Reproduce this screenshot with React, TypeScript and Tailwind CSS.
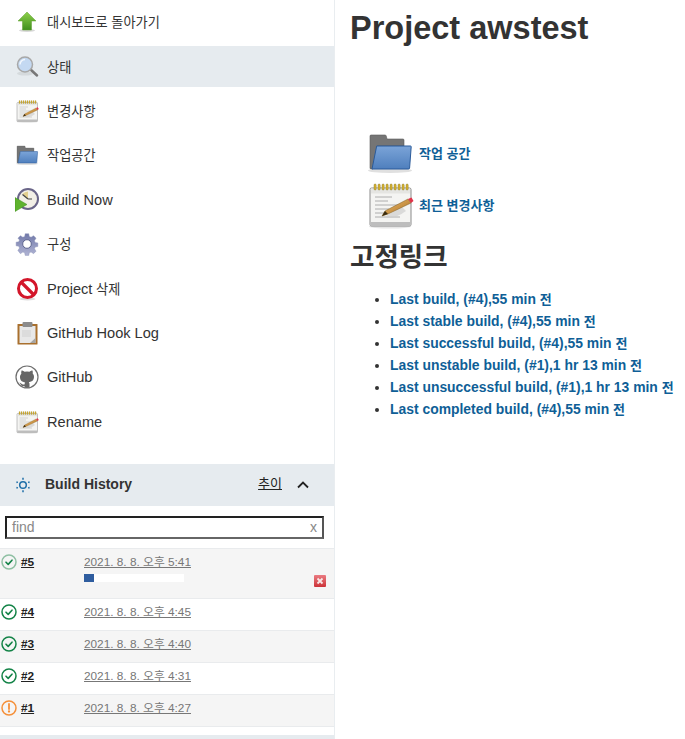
const FONT = "font-['Liberation_Sans','Noto_Sans_CJK_KR',sans-serif]";

function UpIcon() {
  return (
    <svg viewBox="0 0 24 24" className="w-6 h-6">
      <defs>
        <linearGradient id="upg" x1="0" y1="0" x2="0" y2="1">
          <stop offset="0" stopColor="#8ed04a" />
          <stop offset="1" stopColor="#3f8f1e" />
        </linearGradient>
      </defs>
      <ellipse cx="12" cy="20.500" rx="8" ry="1.500" fill="#d8d8d8" />
      <path d="M12 2 21 11h-4.500v9h-9v-9H3z" fill="url(#upg)" stroke="#5c9e2e" strokeWidth="0.500" />
    </svg>
  );
}

function SearchIcon() {
  return (
    <svg viewBox="0 0 24 24" className="w-6 h-6">
      <ellipse cx="10" cy="18.500" rx="8" ry="2" fill="#d5dadd" />
      <path d="m15 14 7 6.500" stroke="#777" strokeWidth="2.500" strokeLinecap="round" />
      <circle cx="10" cy="9.500" r="7.500" fill="#c4d9f2" stroke="#a8a8a8" strokeWidth="1.500" />
      <path d="M5 9.500a5 5 0 0 1 5-5" stroke="#f2f7fd" strokeWidth="1.500" fill="none" />
    </svg>
  );
}

function NoteIcon({ className }: { className: string }) {
  return (
    <svg viewBox="0 0 48 48" className={className}>
      <defs>
        <linearGradient id="penb" x1="0" y1="0" x2="1" y2="1">
          <stop offset="0" stopColor="#f0c070" />
          <stop offset="1" stopColor="#a86c20" />
        </linearGradient>
      </defs>
      <ellipse cx="24" cy="45.500" rx="21" ry="2" fill="#e6e6e6" />
      <rect x="4" y="7" width="41" height="38" rx="1.500" fill="#f4f4f2" stroke="#8a8a8a" />
      <rect x="4.500" y="41" width="40" height="4" fill="#bdbdbd" />
      <rect x="5" y="7.500" width="39" height="5" fill="#e5e5e2" />
      {[9, 13, 17, 21, 25, 29, 33, 37, 41].map((x) => (
        <rect key={x} x={x - 1} y="3" width="2.200" height="6" rx="1" fill="#d9b431" stroke="#7a6a20" strokeWidth="0.400" />
      ))}
      <path d="M9 16h17M9 20h13M9 24h25M9 28h14M9 32h9M9 36h25" stroke="#9d9d9d" strokeWidth="0.800" />
      <path d="M18 36c8 1 14 0 22-6l-4-4z" fill="#cfcfcf" opacity="0.7" />
      <path d="m16 35 3-5 23-12 3 4-23 11z" fill="url(#penb)" stroke="#7a5a20" strokeWidth="0.500" />
      <path d="m16 35 3-5 3 3z" fill="#3a2c10" />
      <path d="m42 18 3.500-1.500 2 3.500-2.500 2z" fill="#e0344a" />
    </svg>
  );
}

function FolderIcon({ className }: { className: string }) {
  return (
    <svg viewBox="0 0 48 48" className={className}>
      <defs>
        <linearGradient id="fb" x1="0" y1="0" x2="0" y2="1">
          <stop offset="0" stopColor="#7ba4d8" />
          <stop offset="1" stopColor="#4f7fbd" />
        </linearGradient>
      </defs>
      <ellipse cx="24" cy="41.500" rx="22" ry="2.500" fill="#e0e0e0" />
      <path d="M4 7c0-.6 .4-1 1-1h14c.6 0 1 .3 1.200 .8L21 10h16c.6 0 1 .4 1 1v6H11L7 40H5c-.6 0-1-.4-1-1z" fill="#757575" stroke="#5c5c5c" strokeWidth="0.600" />
      <path d="M10.700 17H44.500c.5 0 .8 .3 .7 .8L43.600 39c0 .6-.5 1-1 1H6z" fill="url(#fb)" stroke="#2b5b9a" strokeWidth="1" />
    </svg>
  );
}

function BuildIcon() {
  return (
    <svg viewBox="0 0 24 24" className="w-6 h-6">
      <circle cx="13" cy="11" r="10" fill="#f2efe6" stroke="#6a6588" strokeWidth="2" />
      <path d="M13 11V3.500A7.500 7.500 0 0 0 7.500 6z" fill="#e3cf8e" />
      <path d="M13 11 7.500 6.500M13 11h4" stroke="#444" strokeWidth="1.200" />
      <path d="M0 9.500V23.500l12-7z" fill="#5fb32e" stroke="#3f8f1e" strokeWidth="0.500" />
    </svg>
  );
}

function GearIcon() {
  return (
    <svg viewBox="0 0 24 24" className="w-6 h-6">
      <defs>
        <linearGradient id="gg" x1="0" y1="0" x2="0" y2="1">
          <stop offset="0" stopColor="#7078a8" />
          <stop offset="1" stopColor="#b0b4d4" />
        </linearGradient>
      </defs>
      <path
        d="M10 1h4l.6 3.200 2 .8L19.400 3.200l2.800 2.800-1.800 2.800.8 2 3 .6v4l-3 .6-.8 2 1.800 2.600-2.800 2.800-2.800-1.800-2 .8-.6 3h-4l-.6-3-2-.8-2.800 1.800L1.800 19.800l1.800-2.600-.8-2-3-.6v-4l3-.6.8-2L1.800 6l2.800-2.800L7.400 5l2-.8z"
        transform="translate(1.300 .8) scale(0.890)"
        fill="url(#gg)"
        stroke="#8e93b8"
        strokeWidth="0.500"
      />
      <circle cx="12" cy="12" r="4.300" fill="#fff" stroke="#5f6690" />
    </svg>
  );
}

function NoIcon() {
  return (
    <svg viewBox="0 0 24 24" className="w-6 h-6">
      <ellipse cx="12.500" cy="22" rx="8" ry="1.500" fill="#dcdcdc" />
      <circle cx="12.500" cy="11.500" r="9" fill="#fff" stroke="#d3162a" strokeWidth="3" />
      <path d="m6 5 13 13" stroke="#d3162a" strokeWidth="3.200" />
    </svg>
  );
}

function ClipboardIcon() {
  return (
    <svg viewBox="0 0 24 24" className="w-6 h-6">
      <rect x="2.500" y="3" width="20" height="20.500" rx="0.500" fill="#a9702e" />
      <rect x="4.500" y="5" width="16" height="17" fill="#e8e8e8" />
      <rect x="7.500" y="1" width="10" height="5" rx="1" fill="#8c8c8c" />
      <path d="M15 22h5.500v-5z" fill="#a5a5a5" />
      <path d="M7 9h9v7H7z" fill="#dcdcdc" />
    </svg>
  );
}

function GithubIcon() {
  return (
    <svg viewBox="0 0 24 24" className="w-6 h-6">
      <circle cx="12" cy="12" r="11" fill="#fff" stroke="#6e6e6e" strokeWidth="1.200" />
      <path
        d="M6.500 5.500c1.200 0 2.300 .7 3 1.300a9 9 0 0 1 5 0c.7-.6 1.800-1.300 3-1.300.4 1 .4 2.200.2 3 .8.900 1.300 2 1.300 3.300 0 3.700-2.200 5-5.200 5.300.5.500.7 1.200.7 2v3.500a11 11 0 0 1-5 0v-1.500c-2.500.5-3.500-.7-4-2-.3-.7-.7-1-1.200-1.300.8-.3 1.700.2 2.200 1 .6.800 1.500 1 3 .6 0-.8.300-1.500.7-2-3-.3-5.200-1.600-5.200-5.300 0-1.300.5-2.400 1.300-3.300-.2-.8-.2-2 .2-3z"
        fill="#666"
      />
    </svg>
  );
}

function SunIcon() {
  return (
    <svg viewBox="0 0 16 16" className="w-4 h-4" fill="none" stroke="#1f6fa8">
      <circle cx="8" cy="8" r="3.300" strokeWidth="1.500" />
      <path d="M8 .8v2M8 13.200v2M1.800 4.500l.6 1.500M14.200 4.500l-.6 1.500M1.800 11.500l.6-1.500M14.200 11.500l-.6-1.500" strokeWidth="1.500" />
    </svg>
  );
}

function Check({ faded }: { faded?: boolean }) {
  return (
    <svg viewBox="0 0 16 16" className="w-4 h-4" fill="none">
      <circle cx="8" cy="8" r="7" strokeWidth="1.500" stroke={faded ? "#8fc0a3" : "#138347"} />
      <path d="m5 8.200 2.200 2.200L11 6.200" strokeWidth="1.600" strokeLinecap="round" strokeLinejoin="round" stroke="#138347" />
    </svg>
  );
}

function Warn() {
  return (
    <svg viewBox="0 0 16 16" className="w-4 h-4" fill="none" stroke="#f5903a">
      <circle cx="8" cy="8" r="7" strokeWidth="1.500" />
      <path d="M8 4v5" strokeWidth="1.800" strokeLinecap="round" />
      <circle cx="8" cy="11.500" r="0.600" strokeWidth="1.100" />
    </svg>
  );
}

const tasks = [
  { icon: <UpIcon />, label: "대시보드로 돌아가기", ko: true },
  { icon: <SearchIcon />, label: "상태", ko: true, active: true },
  { icon: <NoteIcon className="w-6 h-6" />, label: "변경사항", ko: true },
  { icon: <FolderIcon className="w-6 h-6" />, label: "작업공간", ko: true },
  { icon: <BuildIcon />, label: "Build Now" },
  { icon: <GearIcon />, label: "구성", ko: true },
  { icon: <NoIcon />, label: "Project", suffix: "삭제" },
  { icon: <ClipboardIcon />, label: "GitHub Hook Log" },
  { icon: <GithubIcon />, label: "GitHub" },
  { icon: <NoteIcon className="w-6 h-6" />, label: "Rename" },
];

const builds = [
  { num: "#4", date: "2021. 8. 8. 오후 4:45", odd: false },
  { num: "#3", date: "2021. 8. 8. 오후 4:40", odd: true },
  { num: "#2", date: "2021. 8. 8. 오후 4:31", odd: false },
  { num: "#1", date: "2021. 8. 8. 오후 4:27", odd: true, warn: true },
];

const links = [
  "Last build, (#4),55 min",
  "Last stable build, (#4),55 min",
  "Last successful build, (#4),55 min",
  "Last unstable build, (#1),1 hr 13 min",
  "Last unsuccessful build, (#1),1 hr 13 min",
  "Last completed build, (#4),55 min",
];

export default function App() {
  return (
    <div className={`${FONT} flex h-[739px] w-[685px] overflow-hidden bg-white text-[#333]`}>
      {/* 왼쪽 사이드바 */}
      <aside className="w-[335px] shrink-0 border-r border-[#e9edf0]">
        <nav className="mb-[20px] flex flex-col gap-[3.4px] py-[1.7px]">
          {tasks.map((t) => (
            <div
              key={t.label}
              className={`flex h-[41px] items-center gap-2 pl-[15px] ${t.ko ? "text-[13.2px]" : "text-[14.6px]"} ${t.active ? "bg-[#e6ebef]" : ""}`}
            >
              {t.icon}
              <span className="pt-[2px]">
                {t.label}
                {t.suffix ? <span className="text-[13.2px]"> {t.suffix}</span> : null}
              </span>
            </div>
          ))}
        </nav>

        {/* Build History */}
        <div className="flex h-[42px] items-center bg-[#e6ebef] pl-[15px] pr-[25px] text-sm">
          <SunIcon />
          <span className="ml-[14px] flex-1 pb-[2px] font-bold">Build History</span>
          <span className="pb-[2px] text-[13px] text-[#222] underline">추이</span>
          <svg viewBox="0 0 12 8" className="ml-[15px] h-2 w-3" fill="none" stroke="#222" strokeWidth="1.800">
            <path d="m1 6.500 5-5 5 5" />
          </svg>
        </div>
        <div className="h-[42px] px-[5px] pt-[10px]">
          <div className="flex h-[23px] w-[319px] items-center justify-between border-2 border-t-[#222] border-l-[#222] border-r-[#555] border-b-[#666] px-[5px] text-sm text-[#888]">
            <span>find</span>
            <span>x</span>
          </div>
        </div>

        <div className="border-t border-[#e9ebed] text-[11.8px]">
          <div className="relative h-[49px] bg-[#f5f5f5] pl-px pt-[5px]">
            <div className="flex items-start">
              <Check faded />
              <span className="ml-1 w-[63px] font-bold text-[#222] underline">#5</span>
              <div>
                <div className="text-[#777] underline">2021. 8. 8. 오후 5:41</div>
                <div className="mt-[2px] h-2 w-[100px] bg-white">
                  <div className="h-2 w-[10px] bg-[#2f5d9f]" />
                </div>
              </div>
            </div>
            <div className="absolute left-[314px] top-[26px] flex h-3 w-3 items-center justify-center rounded-[1px] bg-linear-to-b from-[#ea7a82] to-[#cc3038]">
              <svg viewBox="0 0 8 8" className="h-2 w-2" stroke="#f8e8e8" strokeWidth="1.800">
                <path d="m1.500 1.500 5 5M6.500 1.500l-5 5" />
              </svg>
            </div>
          </div>
          {builds.map((b) => (
            <div
              key={b.num}
              className={`flex h-8 items-start border-t border-[#e9ebed] pl-px pt-[5px] ${b.odd ? "bg-[#f5f5f5]" : ""}`}
            >
              {b.warn ? <Warn /> : <Check />}
              <span className="ml-1 w-[63px] font-bold text-[#222] underline">{b.num}</span>
              <span className="text-[#777] underline">{b.date}</span>
            </div>
          ))}
          <div className="h-[9px] border-t border-[#e9ebed]" />
          <div className="h-1 bg-[#e6ebef]" />
        </div>
      </aside>

      {/* 본문 */}
      <main className="flex-1 pl-[15px]">
        <h1 className="mt-[11px] whitespace-nowrap text-[32.5px] leading-[34px] font-bold">Project awstest</h1>
        <div className="mt-[84px] pl-[16px] text-[13px] font-bold text-[#0f5f97]">
          <div className="flex items-center gap-[5px]">
            <FolderIcon className="h-12 w-12" />
            <span className="pt-[2px]">작업 공간</span>
          </div>
          <div className="mt-[4px] flex items-center gap-[5px]">
            <NoteIcon className="h-12 w-12" />
            <span className="pt-[2px]">최근 변경사항</span>
          </div>
        </div>
        <h2 className="mt-[11px] text-[26.5px] leading-[34px] font-bold">고정링크</h2>
        <ul className="mt-[14px] list-disc pl-[40px] text-[13.9px] font-bold text-[#0f5f97] marker:text-[#333]">
          {links.map((l) => (
            <li key={l} className="h-[22px] leading-[22px] whitespace-nowrap">
              {l} <span className="text-[13px] font-bold text-[#0f5f97]">전</span>
            </li>
          ))}
        </ul>
      </main>
    </div>
  );
}
